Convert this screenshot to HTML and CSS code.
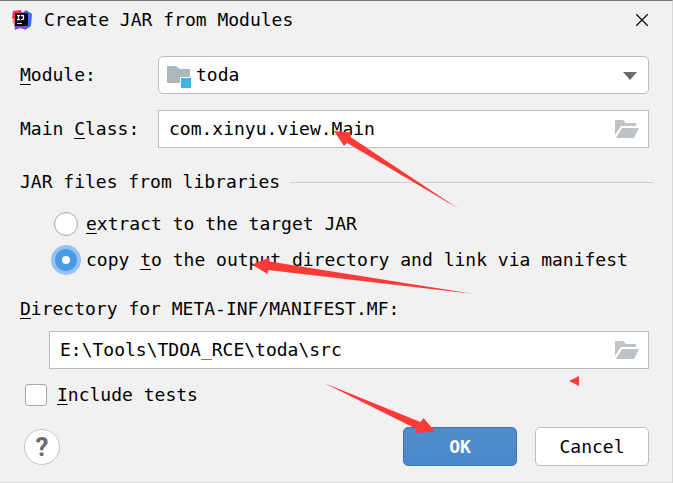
FILE: index.html
```html
<!DOCTYPE html>
<html lang="en">
<head>
<meta charset="utf-8">
<meta name="viewport" content="width=device-width, initial-scale=1">
<title>Create JAR from Modules</title>
<link rel="stylesheet" href="styles.css">
</head>
<body>
<main class="dialog">
  <header class="titlebar">
    <svg class="logo" viewBox="0 0 20 20" aria-hidden="true">
      <path fill="#f98b2a" d="M0 11 4 7 6 16 2 14z"/>
      <path fill="#fb2d5c" d="M1 1 9 0 11 6 6 12 0 8z"/>
      <path fill="#3a6ff0" d="M10 3 14 0 20 4 19 16 13 20 10 16z"/>
      <path fill="#8a3be0" d="M2 13 8 14 15 18 11 19 8 18 3 20z"/>
      <path fill="#b53cc8" d="M8 1 12 3 12 6 8 6z"/>
      <path fill="#0b0b0f" d="M3 3h13v13H3z"/>
      <path fill="none" stroke="#fff" stroke-width="1.2" d="M5 5.600h3M6.500 5.600v4M5 9.600h3M9 5.600h3M11.500 5.600v3q0 1-2.500 1"/>
      <path fill="#ddd" d="M5 13h5v1H5z"/>
    </svg>
    <h1 class="title">Create JAR from Modules</h1>
    <button class="close" type="button" aria-label="Close">
      <svg viewBox="0 0 12 12" width="12" height="12"><path d="M0 0 12 12M12 0 0 12" fill="none" stroke="#111" stroke-width="1.3"/></svg>
    </button>
  </header>

  <form class="form">
    <div class="row">
      <label class="label" for="module"><u>M</u>odule:</label>
      <div class="field">
        <svg class="module-icon" viewBox="0 0 24 22" aria-hidden="true">
          <path fill="#adb7be" d="M0 0h9l4 3h10v14H0z"/>
          <path fill="#fff" d="M13 11h11v11H13z"/>
          <path fill="#40b4e2" d="M14 12h10v10H14z"/>
        </svg>
        <select class="control select" id="module"><option>toda</option></select>
        <svg class="caret" viewBox="0 0 14 8" aria-hidden="true"><path fill="#6b6b6b" d="M0 0h14L7 8z"/></svg>
      </div>
    </div>

    <div class="row">
      <label class="label" for="main-class">Main <u>C</u>lass:</label>
      <div class="field">
        <input class="control" id="main-class" type="text" value="com.xinyu.view.Main">
        <button class="browse" type="button" aria-label="Browse for main class">
          <svg viewBox="0 0 24 18" width="24" height="18"><path fill="#bdc3c7" d="M0 0h8l3 3h10v3H6L0 15zM7 8h17l-5 10H1z"/></svg>
        </button>
      </div>
    </div>

    <fieldset class="group">
      <legend class="group-title"><span>JAR files from libraries</span></legend>
      <div class="option">
        <input class="radio" type="radio" name="libs" id="extract">
        <label for="extract"><u>e</u>xtract to the target JAR</label>
      </div>
      <div class="option">
        <input class="radio" type="radio" name="libs" id="copy" checked>
        <label for="copy">copy <u>t</u>o the output directory and link via manifest</label>
      </div>
    </fieldset>

    <div class="directory">
      <label for="directory"><u>D</u>irectory for META-INF/MANIFEST.MF:</label>
      <div class="field directory-field">
        <input class="control" id="directory" type="text" value="E:\Tools\TDOA_RCE\toda\src">
        <button class="browse" type="button" aria-label="Browse for directory">
          <svg viewBox="0 0 24 18" width="24" height="18"><path fill="#bdc3c7" d="M0 0h8l3 3h10v3H6L0 15zM7 8h17l-5 10H1z"/></svg>
        </button>
      </div>
    </div>

    <div class="check">
      <input class="checkbox" type="checkbox" id="tests">
      <label for="tests"><u>I</u>nclude tests</label>
    </div>

    <footer class="footer">
      <button class="help" type="button" aria-label="Help">?</button>
      <button class="button primary" type="button">OK</button>
      <button class="button" type="button">Cancel</button>
    </footer>
  </form>

  <svg class="arrows" viewBox="0 0 673 483" width="673" height="483" aria-hidden="true">
    <g fill="#fc3a38">
      <path d="M334 131 351 132.500 350.500 137 459 209 347 143 344 146z"/>
      <path d="M252 264.500 269.500 257.500 269.500 261.500 474 294 268 270 267.500 274z"/>
      <path d="M435 431.500 423.500 418 420.500 422 324 383 416.500 429 415.500 433z"/>
      <path d="M569 381 579 376V386z"/>
    </g>
  </svg>
</main>
</body>
</html>
```
FILE: styles.css
```css
* {
  box-sizing: border-box;
}

body {
  margin: 0;
  background: #f1f1f1;
}

body,
button,
input,
select {
  font: 18px/24px "DejaVu Sans Mono", "Liberation Mono", monospace;
  color: #000;
}

.dialog {
  position: relative;
  min-height: 100vh;
  border-top: 1px solid #767374;
  border-right: 1px solid #d8d8d8;
  border-bottom: 1px solid #d8d8d8;
}

.titlebar {
  display: flex;
  align-items: center;
  gap: 12px;
  height: 37px;
  padding: 0 24px 0 12px;
}

.logo {
  width: 20px;
  height: 20px;
}

.title {
  flex: 1;
  margin: 0;
  font-size: 18px;
  font-weight: 400;
}

.close {
  display: flex;
  padding: 0;
  border: 0;
  background: none;
}

.form {
  padding: 18px 23px 16px 20px;
}

.row {
  display: flex;
  align-items: center;
  margin-bottom: 16px;
}

.label {
  width: 138px;
}

u {
  text-decoration-thickness: 1px;
  text-underline-offset: 3px;
}

.field {
  position: relative;
  flex: 1;
}

.control {
  display: block;
  width: 100%;
  height: 38px;
  padding: 0 44px 2px 10px;
  border: 1px solid #bbbdbe;
  border-radius: 0;
  background: #fff;
  outline: 0;
}

.select {
  appearance: none;
  padding: 0 44px 0 37px;
  border-radius: 5px;
}

.module-icon {
  position: absolute;
  top: 10px;
  left: 9px;
  width: 24px;
  height: 22px;
}

.caret {
  position: absolute;
  top: 16px;
  right: 12px;
  width: 14px;
  height: 8px;
}

.browse {
  position: absolute;
  top: 10px;
  right: 10px;
  display: flex;
  padding: 0;
  border: 0;
  background: none;
}

.group {
  margin: 0;
  padding: 0;
  border: 0;
}

.group-title {
  display: flex;
  align-items: center;
  gap: 10px;
  width: calc(100% + 4px);
  margin: 0;
  padding: 6px 0 12px;
}

.group-title::after {
  content: "";
  flex: 1;
  height: 1px;
  background: #cdcdcd;
}

.option {
  display: flex;
  align-items: center;
  gap: 8px;
  height: 36px;
  padding-left: 34px;
}

.radio {
  appearance: none;
  width: 24px;
  height: 24px;
  margin: 0;
  border: 1px solid #a8a8a8;
  border-radius: 50%;
  background: #fff;
}

.radio:checked {
  border: 8px solid #4a9be4;
  outline: 4px solid #97c3f3;
  outline-offset: -1px;
}

.directory {
  margin-top: 19px;
}

.directory-field {
  margin: 10px 0 0 29px;
}

.check {
  display: flex;
  align-items: center;
  gap: 10px;
  margin: 14px 0 0 5px;
}

.checkbox {
  appearance: none;
  width: 22px;
  height: 22px;
  margin: 0;
  border: 1px solid #a8a8a8;
  border-radius: 3px;
  background: #fff;
}

.footer {
  display: flex;
  align-items: center;
  gap: 18px;
  margin-top: 20px;
}

.help {
  width: 36px;
  height: 36px;
  margin: 0 auto 0 4px;
  padding: 0;
  border: 1px solid #c4c4c4;
  border-radius: 50%;
  background: #fff;
  color: #6b6b6b;
  font: bold 26px/34px Roboto, "Liberation Sans", sans-serif;
}

.button {
  width: 114px;
  height: 39px;
  padding: 0;
  border: 1px solid #bbbdbe;
  border-radius: 5px;
  background: #fff;
}

.primary {
  border-color: #3d75b1;
  background: linear-gradient(#528cc9, #4989cc);
  color: #fff;
  font-weight: 700;
}

.arrows {
  position: absolute;
  top: -1px;
  left: 0;
  pointer-events: none;
}
```
